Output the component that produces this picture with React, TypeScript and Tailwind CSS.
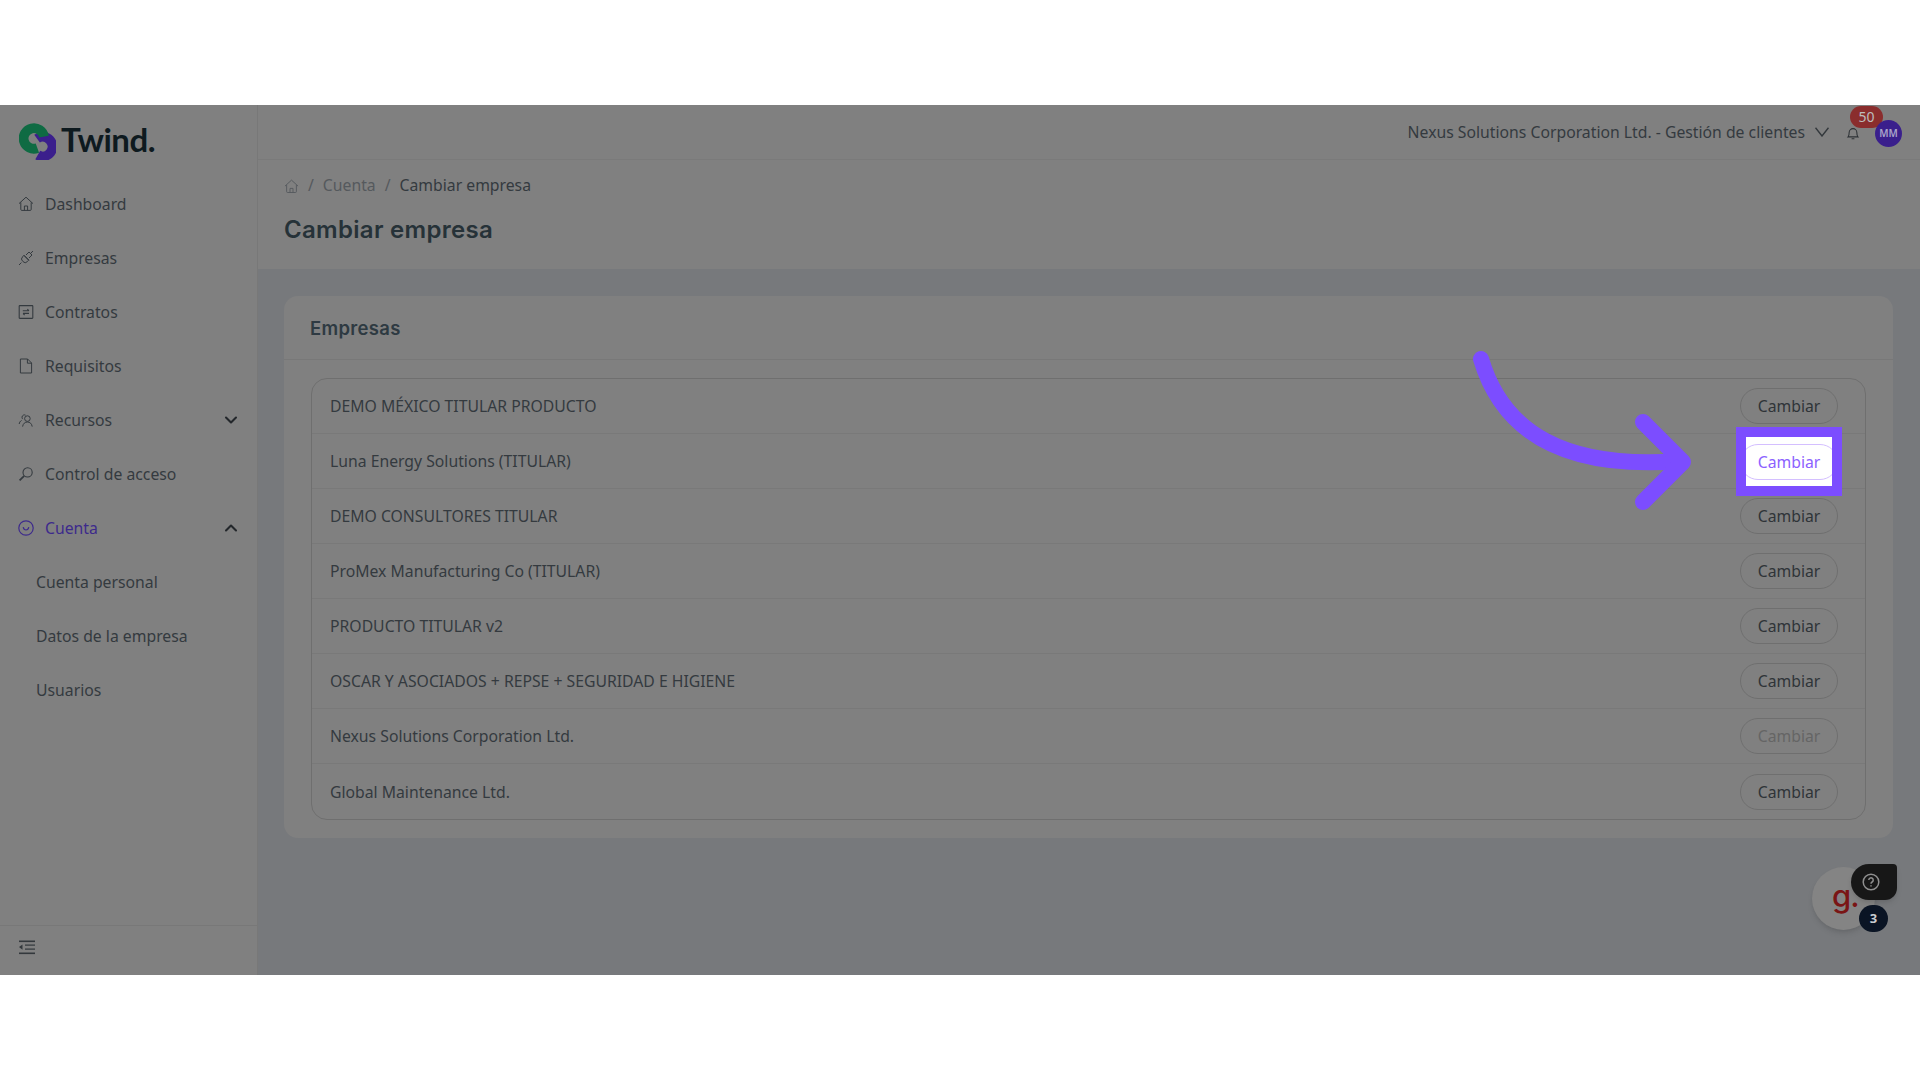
import type { ReactNode } from "react";
import { ChevronDown, ChevronUp } from "lucide-react";

const companies = [
  "DEMO MÉXICO TITULAR PRODUCTO",
  "Luna Energy Solutions (TITULAR)",
  "DEMO CONSULTORES TITULAR",
  "ProMex Manufacturing Co (TITULAR)",
  "PRODUCTO TITULAR v2",
  "OSCAR Y ASOCIADOS + REPSE + SEGURIDAD E HIGIENE",
  "Nexus Solutions Corporation Ltd.",
  "Global Maintenance Ltd.",
];

const HomeIcon = ({ className }: { className: string }) => (
  <svg viewBox="0 0 16 16" fill="none" stroke="currentColor" strokeWidth="1" className={className}>
    <path d="M1 7.6 8 1.2l7 6.4M2.8 6.4v7a1 1 0 0 0 1 1h8.4a1 1 0 0 0 1-1v-7" />
    <path d="M6.4 14.4V10h3.2v4.4" />
  </svg>
);

const PlugIcon = () => (
  <svg viewBox="0 0 16 16" fill="none" stroke="currentColor" strokeWidth="1" className="w-4 h-4">
    <path d="M1 15l2.4-2.4M15 1l-2.6 2.6M6 5.2l5 5M4.6 6.8a3 3 0 0 0 0 4.4l.4.4a3 3 0 0 0 4.4 0l1.2-1.4-4.8-4.8zM8 5l3-3 3 3-3 3" />
  </svg>
);

const ContractIcon = () => (
  <svg viewBox="0 0 16 16" fill="none" stroke="currentColor" strokeWidth="1.1" className="w-4 h-4">
    <rect x="1.2" y="1.6" width="13.6" height="12.8" rx="0.6" />
    <path d="M4.8 6.8h6M9.4 5.2l1.5 1.6M11 9.4H5M6.6 11 5 9.4" />
  </svg>
);

const FileIcon = () => (
  <svg viewBox="0 0 16 16" fill="none" stroke="currentColor" strokeWidth="1" className="w-4 h-4">
    <path d="M2.4 1h7.2l4 4v10H2.4zM9.4 1v4.2h4.2" />
  </svg>
);

const PeopleIcon = () => (
  <svg viewBox="0 0 16 16" fill="none" stroke="currentColor" strokeWidth="1" className="w-4 h-4">
    <circle cx="9.4" cy="6.6" r="2.8" />
    <path d="M4.6 14.6c.4-3 2.4-4.6 4.8-4.6s4.4 1.6 4.8 4.6M7.6 3.2a2.4 2.4 0 0 0-3.6 2c0 .8.3 1.4.8 1.9M3.6 8.4C2.2 9.2 1.4 10.4 1.2 12" />
  </svg>
);

const SearchIcon = () => (
  <svg viewBox="0 0 16 16" fill="none" stroke="currentColor" strokeWidth="1.1" className="w-4 h-4">
    <circle cx="9.6" cy="6.4" r="4.6" />
    <path d="M6.2 9.8 1.6 14.4" strokeWidth="1.8" />
  </svg>
);

const SmileIcon = () => (
  <svg viewBox="0 0 16 16" fill="none" stroke="currentColor" strokeWidth="1.2" className="w-4 h-4">
    <circle cx="8" cy="8" r="7.2" />
    <path d="M5.2 7.2c.4 2 1.4 2.8 2.8 2.8s2.4-.8 2.8-2.8" />
  </svg>
);

const BellIcon = () => (
  <svg viewBox="0 0 16 16" fill="none" stroke="currentColor" strokeWidth="1.2" className="w-[14px] h-[16px] mt-[2px]">
    <path d="M2.4 12.4c1-1 1.2-2.4 1.2-5a4.4 4.4 0 0 1 8.8 0c0 2.6.2 4 1.2 5zM6.4 14.6h3.2" />
  </svg>
);

const Logo = () => (
  <svg viewBox="0 0 36 36" className="w-[37px] h-[37px] mt-[3px]">
    <path d="M17.55 15.2A9.5 9.5 0 1 1 18.25 31.2" fill="none" stroke="#3b1f8c" strokeWidth="9.5" />
    <path d="M24.35 13.3A10 10 0 1 0 17.9 24.4" fill="none" stroke="#0f6b43" strokeWidth="9.5" />
  </svg>
);

const NavItem = ({ icon, label, active, chevron }: { icon: ReactNode; label: string; active?: boolean; chevron?: "up" | "down" }) => (
  <div className={`flex items-center h-[54px] pl-[18px] pr-[16px] gap-[11px] text-[15.75px] ${active ? "text-[#3d2a8c]" : "text-[#343a3f]"}`}>
    {icon}
    <span className="flex-1 pt-[2px]">{label}</span>
    {chevron === "down" && <ChevronDown className="w-[20px] h-[20px] text-[#23272b]" strokeWidth={2.5} />}
    {chevron === "up" && <ChevronUp className="w-[20px] h-[20px] text-[#23272b]" strokeWidth={2.5} />}
  </div>
);

const Sidebar = () => (
  <aside className="w-[258px] shrink-0 flex flex-col bg-[#808080] border-r border-[#787878]">
    <div className="h-[69px] flex items-center pl-[19px] gap-[5px] shrink-0">
      <Logo />
      <span className="font-['Lato',sans-serif] font-bold text-[33px] leading-none tracking-[-0.5px] text-[#0e1a1f]">Twind.</span>
    </div>
    <nav className="flex-1 pt-[3px]">
      <NavItem icon={<HomeIcon className="w-4 h-4" />} label="Dashboard" />
      <NavItem icon={<PlugIcon />} label="Empresas" />
      <NavItem icon={<ContractIcon />} label="Contratos" />
      <NavItem icon={<FileIcon />} label="Requisitos" />
      <NavItem icon={<PeopleIcon />} label="Recursos" chevron="down" />
      <NavItem icon={<SearchIcon />} label="Control de acceso" />
      <NavItem icon={<SmileIcon />} label="Cuenta" active chevron="up" />
      {["Cuenta personal", "Datos de la empresa", "Usuarios"].map((s) => (
        <div key={s} className="h-[54px] flex items-center pt-[2px] pl-[36px] text-[15.75px] text-[#343a3f]">{s}</div>
      ))}
    </nav>
    <div className="h-[50px] shrink-0 border-t border-[#787878] flex items-center pl-[19px] pb-[7px]">
      <svg viewBox="0 0 16 14" className="w-[16px] h-[15px]" fill="#33383c">
        <rect x="0" y="0" width="16" height="1.6" />
        <rect x="6" y="4" width="10" height="1.2" />
        <rect x="6" y="8" width="10" height="1.2" />
        <rect x="0" y="12" width="16" height="1.6" />
        <path d="M0 6.6 3.5 4v5.2z" />
      </svg>
    </div>
  </aside>
);

const Topbar = () => (
  <header className="h-[55px] shrink-0 bg-[#808080] border-b border-[#7a7a7a] flex items-center justify-end pr-[18px]">
    <span className="pt-[2px] text-[15.75px] text-[#343a3f]">Nexus Solutions Corporation Ltd. - Gestión de clientes</span>
    <svg viewBox="0 0 14 10" fill="none" stroke="#33383c" strokeWidth="1.4" className="w-[14px] h-[10px] ml-[10px]">
      <path d="M.5.8 7 9 13.5.8" />
    </svg>
    <div className="relative ml-[17px] mr-[15px] text-[#2c3034] flex">
      <BellIcon />
      <span className="absolute -top-[17px] left-[4px] w-[33px] h-[22px] rounded-full bg-[#8a2d2d] text-[#bdbdbd] text-[14px] leading-[21px] text-center">50</span>
    </div>
    <div className="relative w-[27px] h-[27px] mt-[2px] rounded-full bg-[#3a1f8c] text-[#a9a3c9] text-[10px] font-semibold flex items-center justify-center">MM</div>
  </header>
);

const Row = ({ name, disabled }: { name: string; disabled: boolean }) => (
  <div className="h-[55px] flex items-center justify-between pl-[18px] pr-[27px] border-b last:border-b-0 border-[#797979] text-[15.75px] text-[#343a3f]">
    <span className="pt-[2px]">{name}</span>
    <button className={`w-[98px] h-[36px] pt-[2px] rounded-full border border-[#6f6f6f] ${disabled ? "text-[#656565]" : "text-[#2f3438]"}`}>Cambiar</button>
  </div>
);

const Main = () => (
  <main className="flex-1 min-w-0 flex flex-col bg-[#77797c] relative">
    <Topbar />
    <div className="h-[109px] shrink-0 bg-[#808080] pl-[26px] pt-[15px]">
      <div className="flex items-center text-[15.75px] gap-[9px] h-[22px]">
        <HomeIcon className="w-[15px] h-[15px] text-[#555a5e]" />
        <span className="text-[#55595d]">/</span>
        <span className="text-[#55595d]">Cuenta</span>
        <span className="text-[#55595d]">/</span>
        <span className="text-[#343a3f]">Cambiar empresa</span>
      </div>
      <h1 className="font-['Inter',sans-serif] font-semibold text-[24px] tracking-[0.3px] leading-[30px] mt-[18px] text-[#263238]">Cambiar empresa</h1>
    </div>
    <div className="pl-[26px] pr-[27px] pt-[27px]">
      <section className="bg-[#808080] rounded-[14px]">
        <h2 className="h-[64px] pt-[2px] flex items-center pl-[26px] font-['Inter',sans-serif] font-semibold text-[18.5px] tracking-[0.3px] text-[#2e3a42] border-b border-[#787878]">Empresas</h2>
        <div className="py-[18px] px-[27px]">
          <div className="border border-[#6f6f6f] rounded-[16px]">
            {companies.map((name, i) => (
              <Row key={name} name={name} disabled={i === 6} />
            ))}
          </div>
        </div>
      </section>
    </div>
    <div className="absolute left-[1554px] top-[762px] w-[63px] h-[63px] rounded-full bg-[#848484] shadow-md flex items-center pl-[20px] font-['Inter',sans-serif] font-medium text-[31px] tracking-[-1px] leading-none pb-[6px] text-[#7a1515]">g.</div>
    <div className="absolute left-[1593px] top-[759px] w-[46px] h-[36px] rounded-l-[18px] rounded-br-[12px] rounded-tr-[4px] bg-[#171717] flex items-center pl-[11px] shadow-md">
      <svg viewBox="0 0 18 18" className="w-[18px] h-[18px]" fill="none" stroke="#8f8f8f" strokeWidth="1.5">
        <circle cx="9" cy="9" r="7.8" />
        <path d="M6.8 7a2.2 2.2 0 1 1 3.3 2c-.8.5-1.1 1-1.1 1.8M9 12.2v1.4" />
      </svg>
    </div>
    <div className="absolute left-[1601px] top-[800px] w-[29px] h-[27px] rounded-full bg-[#0a1424] text-[#c9ccd2] text-[13px] font-bold flex items-center justify-center">3</div>
  </main>
);

const App = () => (
  <div className="w-[1920px] h-[1080px] bg-white pt-[105px] font-['Noto_Sans','Open_Sans',sans-serif]">
    <div className="relative w-full h-[870px] flex overflow-hidden">
      <Sidebar />
      <Main />
      {/* highlight box and arrow from the tutorial overlay */}
      <div className="absolute left-[1736px] top-[322px] w-[106px] h-[69px] border-[10px] border-[#7c4dff] bg-white overflow-hidden flex items-center justify-center">
        <button className="shrink-0 w-[98px] h-[36px] pt-[2px] rounded-full border-[1.5px] border-[#d4bfff] text-[15.75px] text-[#8c62ff]">Cambiar</button>
      </div>
      <svg viewBox="0 0 240 175" className="absolute left-[1465px] top-[243px] w-[240px] h-[175px]" fill="none" stroke="#7c4dff" strokeWidth="16" strokeLinecap="round" strokeLinejoin="round">
        <path d="M16 11C38 85 100 122 216 113" />
        <path d="M178 74 218 114 178 154" />
      </svg>
    </div>
  </div>
);

export default App;
